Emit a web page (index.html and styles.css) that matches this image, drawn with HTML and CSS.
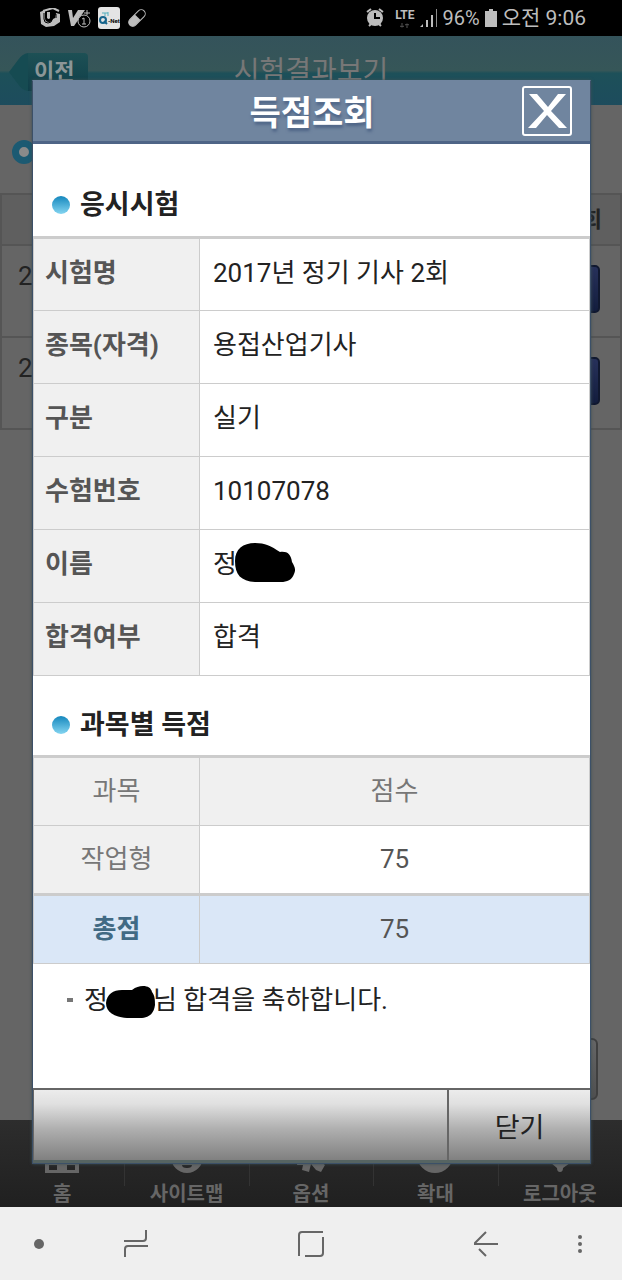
FILE: index.html
```html
<!DOCTYPE html>
<html lang="ko">
<head>
  <meta charset="UTF-8">
  <meta name="viewport" content="width=device-width, initial-scale=1.0">
  <title>득점조회</title>
  <link rel="stylesheet" href="styles.css">
</head>
<body>
  <div class="status-bar">
    <div class="status-left">
      <svg width="22" height="20" viewBox="0 0 22 20">
        <path d="M1 4L6 2v8q0 4 4 4 3 0 4-3l2-1 1-5 4 1v8l-6 4-8 1-5-3z" fill="#bdbdbd"/>
        <path d="M4 3L14 0l6 3" fill="none" stroke="#bdbdbd" stroke-width="2"/>
        <path d="M5 5v6q0 4 4 4t4-4V5M13 8l4-2v4" fill="none" stroke="#000" stroke-width="1"/>
        <path d="M8 4h3v6q-1 2-3 0z" fill="#bdbdbd"/>
      </svg>
      <svg width="23" height="20" viewBox="0 0 23 20">
        <path d="M0 2h4l1 8 5-8h7L6 18H3z" fill="#bdbdbd"/>
        <path d="M16 5h6M19 2v5" stroke="#bdbdbd" stroke-width="1"/>
        <circle cx="16" cy="13" r="6" fill="#000" stroke="#bdbdbd"/>
        <path d="M14 11l2-1v6M14 16h4" fill="none" stroke="#bdbdbd"/>
      </svg>
      <svg width="22" height="22" viewBox="0 0 22 22">
        <rect width="22" height="22" rx="3" fill="#e4e4e4"/>
        <path d="M4 6h6M7 6v3M10 5v4" stroke="#55aebd" fill="none"/>
        <circle cx="5" cy="13" r="3" fill="none" stroke="#17658c" stroke-width="2"/>
        <path d="M6 14l3 3" stroke="#17658c" stroke-width="2"/>
        <text x="10" y="16" class="qnet">-Net</text>
      </svg>
      <svg width="20" height="20" viewBox="0 0 20 20">
        <g transform="rotate(45 10 10)">
          <rect x="6" y="0" width="8" height="20" rx="4" fill="none" stroke="#bdbdbd"/>
          <path d="M6 9h8v7a4 4 0 0 1-8 0z" fill="#bdbdbd"/>
        </g>
      </svg>
    </div>
    <div class="status-right">
      <svg width="19" height="20" viewBox="0 0 19 20">
        <circle cx="9" cy="10" r="8" fill="#bdbdbd"/>
        <path d="M1 4l4-3M17 4l-4-3M3 18l2-2M15 18l-2-2" stroke="#bdbdbd" stroke-width="2"/>
        <path d="M9 5v5h5" fill="none" stroke="#000" stroke-width="2"/>
      </svg>
      <span class="lte">LTE<svg width="12" height="5" viewBox="0 0 12 5"><path d="M3 0v4M1 3l2 1 2-1M8 5V1M6 2l2-1 2 1" fill="none" stroke="#555"/></svg></span>
      <svg width="18" height="18" viewBox="0 0 18 18">
        <path d="M0 18l3-3v3zM6 11h2v7H6zM11 6h2v12h-2z" fill="#bdbdbd"/>
        <path d="M16 0h1v18h-1z" fill="#8a8a8a"/>
      </svg>
      <span>96%</span>
      <svg width="12" height="18" viewBox="0 0 12 18"><path d="M4 0h4v2h4v16H0V2h4z" fill="#bdbdbd"/></svg>
      <span class="clock">오전 9:06</span>
    </div>
  </div>

  <div class="app">
    <header class="app-header">
      <a class="back" href="#">
        <svg width="19" height="38" viewBox="0 0 19 38"><path d="M19 0Q13 1 9 7L0 19l9 12q4 6 10 7z" fill="#164b52"/></svg>
        <span>이전</span>
      </a>
      <h1>시험결과보기</h1>
    </header>

    <main class="page">
      <div class="page-title"><span class="ring"></span></div>
      <table class="exam-list">
        <thead>
          <tr><th></th><th class="view">회</th></tr>
        </thead>
        <tbody>
          <tr><td>2</td><td class="view"><button type="button" class="view-btn" aria-label="보기"></button></td></tr>
          <tr><td>2</td><td class="view"><button type="button" class="view-btn" aria-label="보기"></button></td></tr>
        </tbody>
      </table>
      <button type="button" class="page-btn" aria-label="확인"></button>
    </main>

    <nav class="tabs">
      <a href="#">
        <svg width="36" height="32" viewBox="0 0 36 32"><path d="M18 0l18 15h-1v17H1V15H0zM5 24v5h8v-5zM23 24v5h8v-5z" fill="#666" fill-rule="evenodd"/></svg>
        <span>홈</span>
      </a>
      <a href="#">
        <svg width="36" height="32" viewBox="0 0 36 32"><path d="M18 0a16 16 0 1 1 0 32 16 16 0 0 1 0-32zM13 24q0 3 5 3t5-3z" fill="#666" fill-rule="evenodd"/></svg>
        <span>사이트맵</span>
      </a>
      <a href="#">
        <svg width="36" height="32" viewBox="0 0 36 32"><path d="M6 4l26 20-4 7-5-2-5-6-2 8-7-2 1-5H4z" fill="#666"/></svg>
        <span>옵션</span>
      </a>
      <a href="#">
        <svg width="36" height="32" viewBox="0 0 36 32"><circle cx="18" cy="14" r="18" fill="#666"/></svg>
        <span>확대</span>
      </a>
      <a href="#">
        <svg width="36" height="32" viewBox="0 0 36 32"><path d="M9 22h19l-7 5q0 4-3 4t-3-4z" fill="#666"/></svg>
        <span>로그아웃</span>
      </a>
    </nav>

    <section class="dialog" role="dialog" aria-labelledby="dialog-title">
      <div class="dialog-header">
        <h2 id="dialog-title">득점조회</h2>
        <button type="button" class="close-x" aria-label="닫기">
          <svg width="50" height="50" viewBox="0 0 50 50">
            <rect x="1" y="1" width="48" height="48" rx="2" fill="none" stroke="#fff" stroke-width="2"/>
            <path d="M7 8h8l11 13L36 8h8L29 25l16 17h-8L25 29 14 42H6l16-17z" fill="#fff"/>
          </svg>
        </button>
      </div>

      <div class="dialog-body">
        <h3 class="first"><span class="dot"></span>응시시험</h3>
        <table class="info">
          <tbody>
            <tr><th scope="row">시험명</th><td>2017년 정기 기사 2회</td></tr>
            <tr><th scope="row">종목(자격)</th><td>용접산업기사</td></tr>
            <tr><th scope="row">구분</th><td>실기</td></tr>
            <tr><th scope="row">수험번호</th><td>10107078</td></tr>
            <tr>
              <th scope="row">이름</th>
              <td>정<svg class="mask" width="60" height="39" viewBox="0 0 60 39"><path d="M0 18C0 6 8 0 20 0c10 0 16 3 25 9 7-1 11 2 12 10 3 5 4 8 2 12-2 6-7 8-13 8H20C6 38 0 32 0 18z"/></svg></td>
            </tr>
            <tr><th scope="row">합격여부</th><td>합격</td></tr>
          </tbody>
        </table>

        <h3><span class="dot"></span>과목별 득점</h3>
        <table class="score">
          <thead>
            <tr><th scope="col">과목</th><th scope="col">점수</th></tr>
          </thead>
          <tbody>
            <tr><th scope="row">작업형</th><td>75</td></tr>
          </tbody>
          <tfoot>
            <tr><th scope="row">총점</th><td>75</td></tr>
          </tfoot>
        </table>

        <p class="note">정<svg class="mask" width="49" height="32" viewBox="0 0 49 32"><path d="M0 17C1 8 7 4 16 4l10 0C30 1 33 0 37 0c5 0 8 2 9 6 3 4 3 8 3 13-1 8-5 12-13 13H21C8 31 0 26 0 17z"/></svg>님 합격을 축하합니다.</p>
      </div>

      <div class="dialog-footer">
        <div class="bar"></div>
        <button type="button" class="close-btn">닫기</button>
      </div>
    </section>
  </div>

  <div class="nav-bar">
    <div class="nav-group">
      <button type="button" aria-label="고정"><svg width="10" height="10" viewBox="0 0 10 10"><circle cx="5" cy="5" r="5" fill="#666"/></svg></button>
      <button type="button" aria-label="최근 앱"><svg width="24" height="28" viewBox="0 0 24 28"><path d="M0 11h19q3 0 3-3V0M24 16H4q-3 0-3 3v8" fill="none" stroke="#666" stroke-width="2"/></svg></button>
    </div>
    <button type="button" aria-label="홈 화면"><svg width="26" height="26" viewBox="0 0 26 26"><path d="M1 25V4q0-3 3-3h21M25 6v16q0 3-3 3H7" fill="none" stroke="#666" stroke-width="2"/></svg></button>
    <div class="nav-group">
      <button type="button" aria-label="뒤로"><svg width="24" height="26" viewBox="0 0 24 26"><path d="M12 1L1 12v1h23M5 18l7 7" fill="none" stroke="#666" stroke-width="2"/></svg></button>
      <button type="button" aria-label="더보기"><svg width="4" height="18" viewBox="0 0 4 18"><circle cx="2" cy="2" r="2" fill="#666"/><circle cx="2" cy="9" r="2" fill="#666"/><circle cx="2" cy="16" r="2" fill="#666"/></svg></button>
    </div>
  </div>
</body>
</html>
```
FILE: styles.css
```css
* {
  box-sizing: border-box;
}

body {
  margin: 0;
  min-height: 100vh;
  display: flex;
  flex-direction: column;
  font-family: Roboto, "Noto Sans CJK KR", sans-serif;
  font-size: 26px;
  line-height: 36px;
  color: #222;
  background: #646464;
}

h1, h2, h3, p {
  margin: 0;
}

button {
  padding: 0;
  border: none;
  background: none;
  font-family: inherit;
}

table {
  width: 100%;
  border-collapse: collapse;
}

a {
  color: inherit;
  text-decoration: none;
}

/* phone status bar */
.status-bar {
  display: flex;
  justify-content: space-between;
  height: 36px;
  padding: 0 36px 0 39px;
  background: #000;
  color: #bdbdbd;
  font-size: 20px;
}

.status-left, .status-right {
  display: flex;
  align-items: center;
  gap: 8px;
}

.status-left {
  gap: 7px;
}

.status-right {
  gap: 5px;
}

.lte {
  display: flex;
  flex-direction: column;
  align-items: center;
  gap: 2px;
  margin-left: 5px;
  font-size: 12px;
  font-weight: bold;
  line-height: 12px;
}

.clock {
  font-size: 21px;
}

.qnet {
  font-size: 6px;
  font-weight: bold;
}

/* dimmed page under the dialog */
.app {
  position: relative;
  flex: 1;
  display: flex;
  flex-direction: column;
}

.app-header {
  display: grid;
  grid-template-columns: 1fr auto 1fr;
  align-items: center;
  height: 69px;
  padding: 2px 9px 0;
  background: linear-gradient(#34535b, #365658 50%, #1d5059 54%, #1d4c5d);
  color: #777;
}

.app-header h1 {
  font-size: 28px;
  font-weight: normal;
}

.back {
  display: flex;
  align-items: center;
  font-size: 22px;
  font-weight: bold;
  line-height: 38px;
  color: #8b9697;
}

.back span {
  padding: 0 14px 0 6px;
  border-radius: 0 4px 4px 0;
  background: linear-gradient(#1d5055, #103f49);
}

.page {
  flex: 1;
  display: flex;
  flex-direction: column;
  background: #656565;
}

.page-title {
  height: 88px;
  padding: 35px 12px;
}

.ring {
  display: block;
  width: 24px;
  height: 24px;
  border: 7px solid #1c5a72;
  border-radius: 50%;
  background: #8a8a8a;
}

.exam-list th, .exam-list td {
  height: 92px;
  padding: 0 16px;
  border: 2px solid #555;
  font-weight: normal;
  text-align: left;
}

.exam-list td {
  padding-bottom: 30px;
}

.exam-list th {
  height: 51px;
  background: #5f5f5f;
  font-size: 22px;
  font-weight: bold;
}

.exam-list .view {
  padding: 0 18px 0 0;
  text-align: right;
}

.exam-list td.view {
  padding: 0 20px 4px 0;
}

.view-btn {
  width: 90px;
  height: 48px;
  border: 2px solid #10182f;
  border-radius: 5px;
  background: linear-gradient(#27315a, #131d3d);
  vertical-align: middle;
}

.page-btn {
  align-self: flex-end;
  width: 140px;
  height: 62px;
  margin: auto 24px 20px;
  border: 2px solid #3f3f3f;
  border-radius: 6px;
  background: linear-gradient(#666, #505050);
}

.tabs {
  display: grid;
  grid-template-columns: repeat(5, 1fr);
  height: 87px;
  background: linear-gradient(#2d2d2d, #202020);
  color: #666;
  font-size: 20px;
  font-weight: bold;
}

.tabs a {
  display: flex;
  flex-direction: column;
  align-items: center;
  padding-top: 21px;
  background: linear-gradient(#333, #333) left top / 1px 66px no-repeat;
  line-height: 42px;
}

.tabs a:first-child {
  background: none;
}

.tabs svg {
  flex: none;
}

/* dialog */
.dialog {
  position: absolute;
  top: 44px;
  right: 31px;
  bottom: 43px;
  left: 32px;
  display: flex;
  flex-direction: column;
  border: 1px solid #3c5068;
  border-top-color: #70859f;
  background: #fff;
  box-shadow: 0 0 3px #3c5056;
}

.dialog-header {
  display: grid;
  grid-template-columns: 1fr auto 1fr;
  align-items: center;
  height: 63px;
  padding: 0 18px 0 19px;
  border-bottom: 3px solid #4e6486;
  background: #70859f;
  color: #fff;
}

.dialog-header h2 {
  grid-column: 2;
  padding-top: 4px;
  font-size: 34px;
  text-shadow: 1px 3px 3px #4e6486;
}

.close-x {
  justify-self: end;
  height: 50px;
}

.dialog-body {
  flex: 1;
}

h3 {
  display: flex;
  align-items: center;
  gap: 10px;
  padding: 31px 19px 12px;
  font-size: 27px;
}

h3.first {
  padding-top: 43px;
  padding-bottom: 13px;
}

.dot {
  width: 18px;
  height: 18px;
  border-radius: 50%;
  background: linear-gradient(#1587bd, #84d5f1);
}

.info th, .info td, .score th, .score td {
  border: 1px solid #ccc;
}

.info, .score {
  table-layout: fixed;
  border-top: 3px solid #ccc;
}

.info th, .info td {
  height: 73px;
  padding: 0 13px 4px;
  text-align: left;
}

.info th, .score th {
  width: 166px;
  background: #f0f0f0;
  color: #555;
}

.info th {
  padding-left: 11px;
}

.score th, .score td {
  height: 69px;
  padding: 0 0 2px;
  text-align: center;
  font-weight: normal;
  color: #555;
}

.score th {
  color: #777;
}

.score th + th {
  width: auto;
}

.score tfoot th, .score tfoot td {
  border-top: 3px solid #ccc;
  background: #dae7f7;
}

.score tfoot th {
  font-weight: bold;
  color: #416a84;
}

.mask {
  margin: -12px -2px -4px;
  vertical-align: middle;
}

.note {
  display: flex;
  align-items: center;
  padding: 18px 34px;
}

.note .mask {
  margin: 0 -2px -4px;
}

.note::before {
  content: "";
  width: 6px;
  height: 4px;
  margin-right: 11px;
  background: #777;
}

.dialog-footer {
  display: flex;
  height: 75px;
  border-top: 2px solid #666;
  border-bottom: 3px solid #566462;
}

.bar, .close-btn {
  border-left: 1px solid #666;
  background: linear-gradient(#ececec, #e0e0e0 20%, #b0b0b0 55%, #808080);
}

.bar {
  flex: 1;
}

.close-btn {
  width: 143px;
  border-left-width: 2px;
  font-size: 27px;
  color: #222;
}

/* phone navigation bar */
.nav-bar {
  display: flex;
  justify-content: space-between;
  align-items: center;
  height: 73px;
  padding: 0 40px 0 34px;
  background: #efefef;
}

.nav-group {
  display: flex;
  align-items: center;
  gap: 80px;
}

.nav-bar button {
  display: flex;
}
```
